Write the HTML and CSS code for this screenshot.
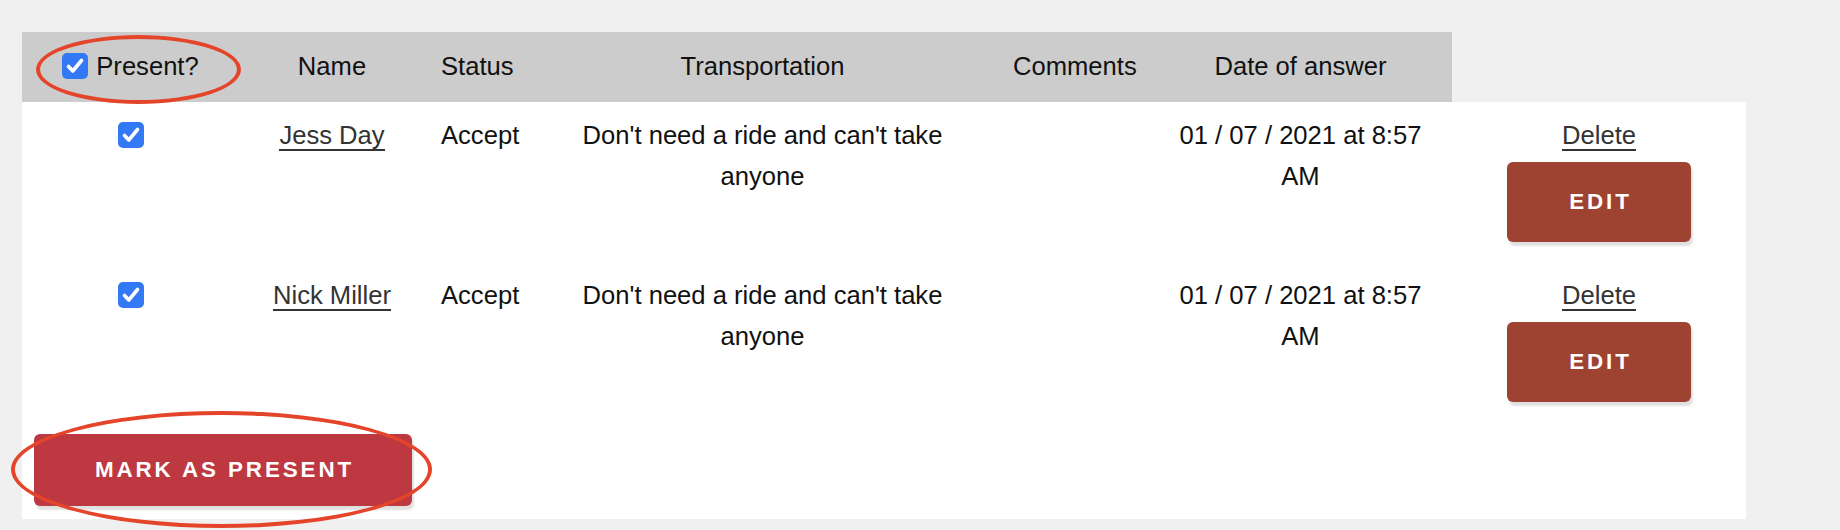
FILE: index.html
```html
<!DOCTYPE html>
<html>
<head>
    <title>Guests</title>
    <link rel="stylesheet" href="styles.css">
</head>
<body>
    <div class="guest-list">
        <table class="guest-table">
            <colgroup>
                <col class="col-present">
                <col class="col-name">
                <col class="col-status">
                <col class="col-transport">
                <col class="col-comments">
                <col class="col-date">
                <col class="col-actions">
            </colgroup>
            <thead>
                <tr>
                    <th class="present-head">
                        <span class="checkbox"><svg viewBox="0 0 26 26" width="26" height="26"><rect width="26" height="26" rx="5" fill="#3379f5"/><path d="M6.5 13.5 L10.8 18 L19.5 7.5" fill="none" stroke="#fff" stroke-width="3.6" stroke-linecap="round" stroke-linejoin="round"/></svg></span>Present?
                        <span class="annotation annotation-head"></span>
                    </th>
                    <th>Name</th>
                    <th>Status</th>
                    <th>Transportation</th>
                    <th>Comments</th>
                    <th>Date of answer</th>
                </tr>
            </thead>
            <tbody>
                <tr>
                    <td><span class="checkbox"><svg viewBox="0 0 26 26" width="26" height="26"><rect width="26" height="26" rx="5" fill="#3379f5"/><path d="M6.5 13.5 L10.8 18 L19.5 7.5" fill="none" stroke="#fff" stroke-width="3.6" stroke-linecap="round" stroke-linejoin="round"/></svg></span></td>
                    <td><a class="guest-link" href="#">Jess Day</a></td>
                    <td>Accept</td>
                    <td>Don't need a ride and can't take anyone</td>
                    <td></td>
                    <td>01 / 07 / 2021 at 8:57 AM</td>
                    <td>
                        <div><a class="guest-link" href="#">Delete</a></div>
                        <button class="btn btn-edit">EDIT</button>
                    </td>
                </tr>
                <tr>
                    <td><span class="checkbox"><svg viewBox="0 0 26 26" width="26" height="26"><rect width="26" height="26" rx="5" fill="#3379f5"/><path d="M6.5 13.5 L10.8 18 L19.5 7.5" fill="none" stroke="#fff" stroke-width="3.6" stroke-linecap="round" stroke-linejoin="round"/></svg></span></td>
                    <td><a class="guest-link" href="#">Nick Miller</a></td>
                    <td>Accept</td>
                    <td>Don't need a ride and can't take anyone</td>
                    <td></td>
                    <td>01 / 07 / 2021 at 8:57 AM</td>
                    <td>
                        <div><a class="guest-link" href="#">Delete</a></div>
                        <button class="btn btn-edit">EDIT</button>
                    </td>
                </tr>
            </tbody>
        </table>

        <div class="table-footer">
            <button class="btn btn-present">MARK AS PRESENT</button>
            <span class="annotation annotation-footer"></span>
        </div>
    </div>
</body>
</html>
```

FILE: styles.css
```css
body {
    margin: 0;
    min-height: 530px;
    background-color: #f0f0f0;
    color: #111;
    font-family: "Liberation Sans", Arial, sans-serif;
    font-size: 25.6px;
    line-height: 1.6;
}

.guest-list {
    width: 1724px;
    padding: 32px 0 0 22px;
}

.guest-table {
    width: 1724px;
    table-layout: fixed;
    border-collapse: collapse;
}

.col-present { width: 217px; }
.col-name { width: 186px; }
.col-status { width: 103px; }
.col-transport { width: 469px; }
.col-comments { width: 152px; }
.col-date { width: 303px; }
.col-actions { width: 294px; }

th {
    background-color: #cccccc;
    font-weight: normal;
    padding: 14px 16px 15px;
    text-align: center;
}

td {
    background-color: #fff;
    padding: 13px 16px;
    text-align: center;
    vertical-align: top;
}

.present-head {
    position: relative;
}

.checkbox {
    display: inline-block;
    width: 26px;
    height: 26px;
    vertical-align: -4px;
}

.present-head .checkbox {
    margin-right: 8px;
}

.checkbox svg {
    display: block;
}

.guest-link {
    color: #333;
    text-decoration: none;
    border-bottom: 2px solid #333;
}

.btn {
    display: block;
    border: none;
    border-radius: 6px;
    padding: 0 0 0 3px;
    color: #fff;
    font-family: "Liberation Sans", Arial, sans-serif;
    font-size: 22.4px;
    font-weight: bold;
    letter-spacing: 2.9px;
    box-shadow: 2px 4px 2px rgba(0, 0, 0, 0.12);
    cursor: pointer;
}

.btn-edit {
    width: 184px;
    height: 80px;
    margin: 6px auto 7px;
    background-color: #9e4331;
}

.btn-present {
    width: 378px;
    height: 72px;
    background-color: #bd3841;
}

.table-footer {
    position: relative;
    background-color: #fff;
    padding: 12px 12px 13px;
}

/* red hand-drawn rings around the bulk "present" controls */
.annotation {
    position: absolute;
    box-sizing: border-box;
    border: 4px solid #e4452a;
    border-radius: 50%;
    pointer-events: none;
}

.annotation-head {
    left: 14px;
    top: 3px;
    width: 205px;
    height: 69px;
}

.annotation-footer {
    left: -11px;
    top: -11px;
    width: 421px;
    height: 117px;
}
```
